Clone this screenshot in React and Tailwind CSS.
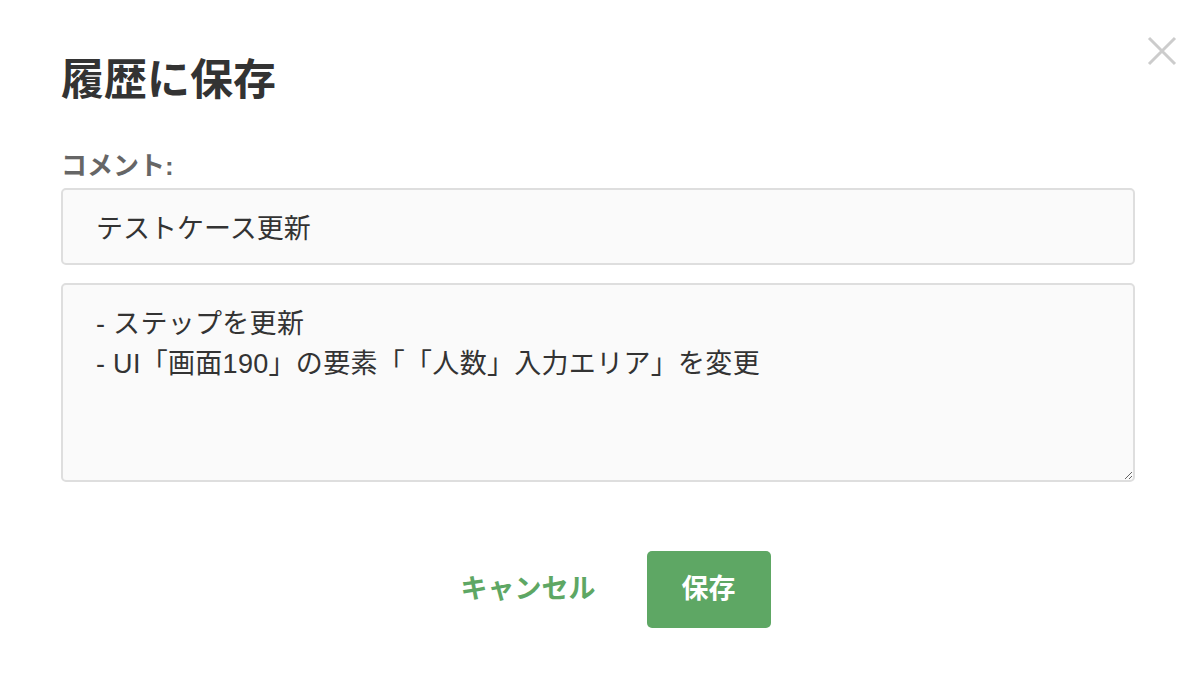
const font = { fontFamily: '"Liberation Sans", "Noto Sans CJK JP", sans-serif' }

const App = () => {
  return (
    <div className="relative w-[1196px] h-[674px] bg-white text-[#333] [text-spacing-trim:space-all]" style={font}>
      {/* close */}
      <button className="absolute left-[1147px] top-[36px] text-[#cccccc]">
        <svg width="30" height="30" viewBox="0 0 30 30" fill="none" stroke="currentColor" strokeWidth="3">
          <path d="M2 2L28 28M28 2L2 28" />
        </svg>
      </button>

      <div className="px-[61px] pt-[50px]">
        <h2 className="text-[43px] leading-[60px] font-bold text-[#333]">履歴に保存</h2>

        <label className="block mt-[38px] text-[26px] leading-[36px] font-bold text-[#666]">コメント:</label>

        <input
          readOnly
          defaultValue="テストケース更新"
          className="mt-[4px] block w-full h-[77px] px-[33px] rounded-[5px] border-2 border-[#dedede] bg-[#fafafa] text-[27px] text-[#333] outline-none [text-spacing-trim:space-all]"
          style={font}
        />

        <textarea
          readOnly
          defaultValue={'- ステップを更新\n- UI「画面190」の要素「「人数」入力エリア」を変更'}
          className="mt-[18px] block w-full h-[199px] px-[33px] py-[19px] rounded-[5px] border-2 border-[#dedede] bg-[#fafafa] text-[27px] leading-[40px] tracking-[0.3px] text-[#333] outline-none [text-spacing-trim:space-all]"
          style={font}
        />

        {/* actions */}
        <div className="mt-[69px] flex justify-center gap-4">
          <button className="h-[77px] px-[35px] text-[27px] font-bold text-[#5ea764]">キャンセル</button>
          <button className="h-[77px] px-[35px] rounded-[5px] bg-[#5ea764] text-[27px] font-bold text-white">保存</button>
        </div>
      </div>
    </div>
  )
}

export default App
